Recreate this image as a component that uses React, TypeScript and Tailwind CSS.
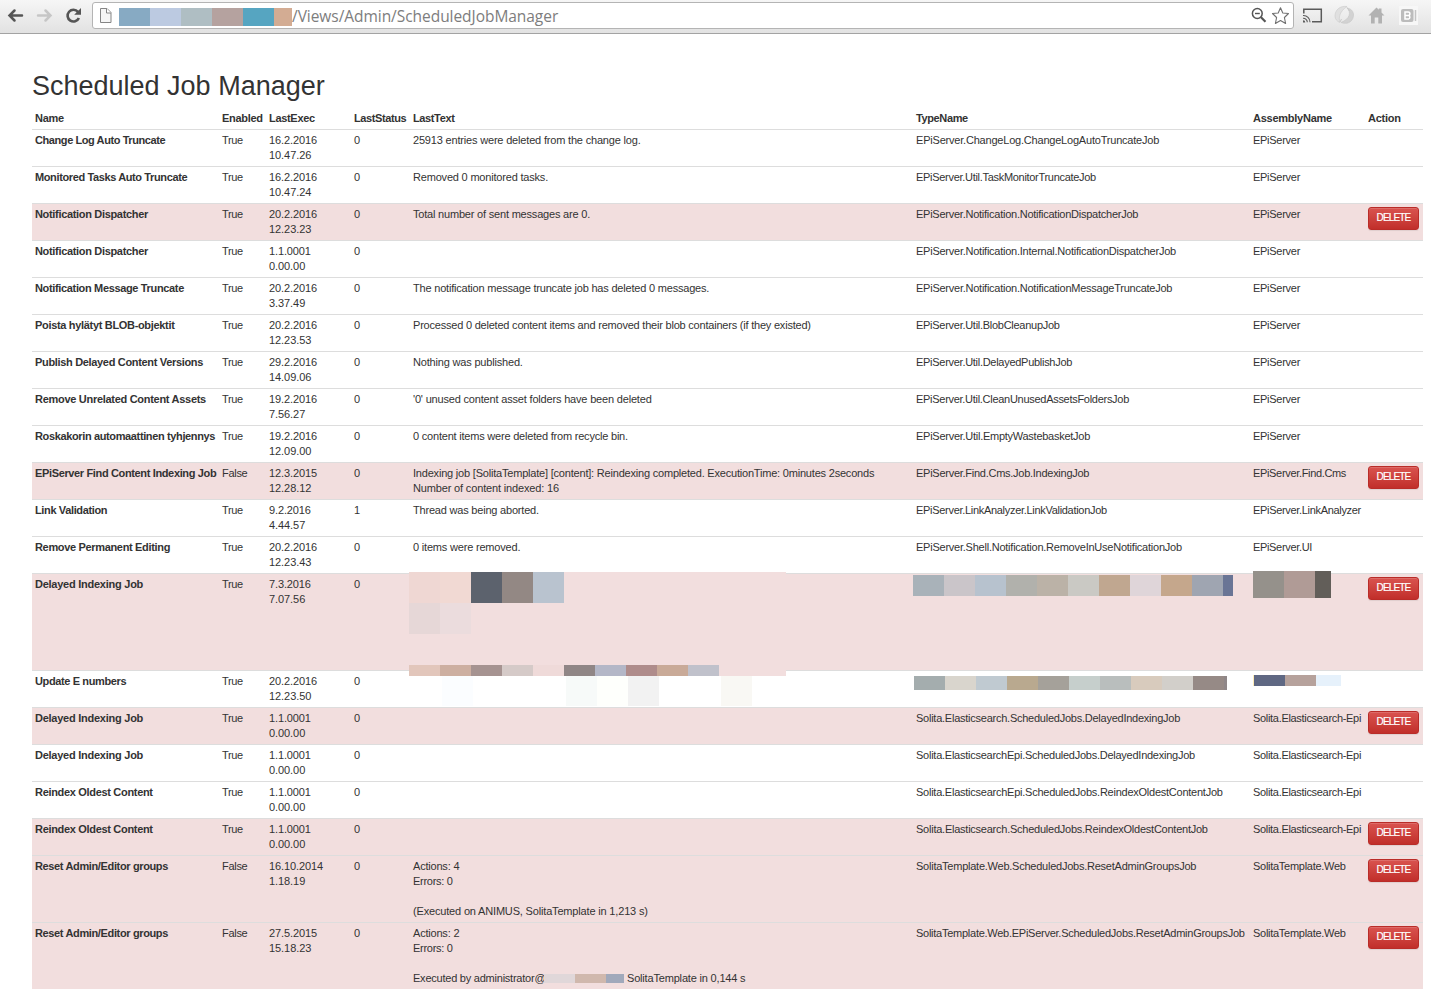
import React from "react";

type Tile = [width: number, color: string];

function Tiles({ items, h, className = "" }: { items: Tile[]; h: number; className?: string }) {
  return (
    <div className={`flex ${className}`} style={{ height: h }}>
      {items.map(([w, c], i) => (
        <span key={i} className="block h-full shrink-0" style={{ width: w, background: c }} />
      ))}
    </div>
  );
}

/** A text and the number of pixels by which its line is tightened. */
type Line = [text: string, tighten: number];

function Tight({ line: [text, by] }: { line: Line }) {
  return <span style={{ letterSpacing: `${-by / text.length}px` }}>{text}</span>;
}

function Lines({ lines }: { lines: Line[] }) {
  return (
    <>
      {lines.map((line, i) => (
        <div key={i} className="h-[15px]">
          <Tight line={line} />
        </div>
      ))}
    </>
  );
}

interface Job {
  name: Line;
  enabled: string;
  exec: [string, string];
  status: string;
  text?: Line[] | React.ReactElement;
  type: Line | React.ReactElement;
  assembly: Line | React.ReactElement;
  stale?: boolean;
  tall?: boolean;
}

const epi: Line = ["EPiServer", 2.5];
const elastic: Line = ["Solita.Elasticsearch-Epi", 7.5];
const web: Line = ["SolitaTemplate.Web", 5];

const jobs: Job[] = [
  { name: ["Change Log Auto Truncate", 10], enabled: "True", exec: ["16.2.2016", "10.47.26"], status: "0", text: [["25913 entries were deleted from the change log.", 8.5]], type: ["EPiServer.ChangeLog.ChangeLogAutoTruncateJob", 9], assembly: epi },
  { name: ["Monitored Tasks Auto Truncate", 11], enabled: "True", exec: ["16.2.2016", "10.47.24"], status: "0", text: [["Removed 0 monitored tasks.", 5]], type: ["EPiServer.Util.TaskMonitorTruncateJob", 11], assembly: epi },
  { name: ["Notification Dispatcher", 7.5], enabled: "True", exec: ["20.2.2016", "12.23.23"], status: "0", text: [["Total number of sent messages are 0.", 7]], type: ["EPiServer.Notification.NotificationDispatcherJob", 12], assembly: epi, stale: true },
  { name: ["Notification Dispatcher", 7.5], enabled: "True", exec: ["1.1.0001", "0.00.00"], status: "0", type: ["EPiServer.Notification.Internal.NotificationDispatcherJob", 14], assembly: epi },
  { name: ["Notification Message Truncate", 10], enabled: "True", exec: ["20.2.2016", "3.37.49"], status: "0", text: [["The notification message truncate job has deleted 0 messages.", 12]], type: ["EPiServer.Notification.NotificationMessageTruncateJob", 13], assembly: epi },
  { name: ["Poista hylätyt BLOB-objektit", 9], enabled: "True", exec: ["20.2.2016", "12.23.53"], status: "0", text: [["Processed 0 deleted content items and removed their blob containers (if they existed)", 18]], type: ["EPiServer.Util.BlobCleanupJob", 8], assembly: epi },
  { name: ["Publish Delayed Content Versions", 10.5], enabled: "True", exec: ["29.2.2016", "14.09.06"], status: "0", text: [["Nothing was published.", 4]], type: ["EPiServer.Util.DelayedPublishJob", 9], assembly: epi },
  { name: ["Remove Unrelated Content Assets", 9], enabled: "True", exec: ["19.2.2016", "7.56.27"], status: "0", text: [["'0' unused content asset folders have been deleted", 9]], type: ["EPiServer.Util.CleanUnusedAssetsFoldersJob", 12], assembly: epi },
  { name: ["Roskakorin automaattinen tyhjennys", 12.5], enabled: "True", exec: ["19.2.2016", "12.09.00"], status: "0", text: [["0 content items were deleted from recycle bin.", 9.5]], type: ["EPiServer.Util.EmptyWastebasketJob", 9], assembly: epi },
  { name: ["EPiServer Find Content Indexing Job", 12.5], enabled: "False", exec: ["12.3.2015", "12.28.12"], status: "0", text: [["Indexing job [SolitaTemplate] [content]: Reindexing completed. ExecutionTime: 0minutes 2seconds", 19], ["Number of content indexed: 16", 4.5]], type: ["EPiServer.Find.Cms.Job.IndexingJob", 9], assembly: ["EPiServer.Find.Cms", 6], stale: true },
  { name: ["Link Validation", 5.5], enabled: "True", exec: ["9.2.2016", "4.44.57"], status: "1", text: [["Thread was being aborted.", 5]], type: ["EPiServer.LinkAnalyzer.LinkValidationJob", 12], assembly: ["EPiServer.LinkAnalyzer", 7] },
  { name: ["Remove Permanent Editing", 8], enabled: "True", exec: ["20.2.2016", "12.23.43"], status: "0", text: [["0 items were removed.", 4]], type: ["EPiServer.Shell.Notification.RemoveInUseNotificationJob", 13], assembly: ["EPiServer.UI", 4] },
  {
    name: ["Delayed Indexing Job", 5], enabled: "True", exec: ["7.3.2016", "7.07.56"], status: "0", stale: true, tall: true,
    text: (
      <div className="absolute -left-px -top-[2px] z-10 flex h-[104px] w-[377px] flex-col bg-[#f2dede]">
        <Tiles h={31} items={[[31, "#efd7d3"], [31, "#f1d9d3"], [31, "#5c626d"], [31, "#938884"], [31, "#b9c3cf"]]} />
        <Tiles h={31} items={[[31, "#e6d7d7"], [31, "#ebdcdd"]]} />
        <Tiles h={11} className="mt-auto" items={[[31, "#e2c6bb"], [31, "#cdafa1"], [31, "#a69391"], [31, "#d5cac8"], [31, "#efdad9"], [31, "#908686"], [31, "#b4b7c7"], [31, "#af8c8b"], [31, "#c9aa98"], [31, "#c0c1cb"]]} />
      </div>
    ),
    type: <Tiles h={21} className="-ml-[3px] -mt-[2px]" items={[[31, "#a9b2b9"], [31, "#cac5c9"], [31, "#b7c2ce"], [31, "#b1b1ac"], [31, "#bbb2a7"], [31, "#cac9c4"], [31, "#c0a790"], [31, "#dfd5d9"], [31, "#c5a78c"], [31, "#9fa5b1"], [10, "#6a7595"]]} />,
    assembly: <Tiles h={27} className="-mt-[6px]" items={[[31, "#95918b"], [31, "#b09b96"], [16, "#625e59"]]} />,
  },
  {
    name: ["Update E numbers", 6], enabled: "True", exec: ["20.2.2016", "12.23.50"], status: "0",
    text: <Tiles h={30} className="-mb-[3px] ml-[29px] mt-[2px]" items={[[31, "#fbfdff"], [93, "transparent"], [31, "#f7faf9"], [31, "#fefffc"], [31, "#f2f2f2"], [62, "transparent"], [31, "#f9f8f4"]]} />,
    type: <Tiles h={14} className="-ml-[2px] mt-[2px]" items={[[31, "#a4adae"], [31, "#d9d5cd"], [31, "#c0cad1"], [31, "#b9a98f"], [31, "#a5a19a"], [31, "#c6cfcc"], [31, "#b9bebd"], [31, "#d8cbbd"], [31, "#d2cfca"], [31, "#968a86"], [3, "#8f8788"]]} />,
    assembly: <Tiles h={11} className="mt-px" items={[[1, "#ffedb8"], [31, "#5f6883"], [31, "#b6a29c"], [25, "#e6f1fb"]]} />,
  },
  { name: ["Delayed Indexing Job", 5], enabled: "True", exec: ["1.1.0001", "0.00.00"], status: "0", type: ["Solita.Elasticsearch.ScheduledJobs.DelayedIndexingJob", 13], assembly: elastic, stale: true },
  { name: ["Delayed Indexing Job", 5], enabled: "True", exec: ["1.1.0001", "0.00.00"], status: "0", type: ["Solita.ElasticsearchEpi.ScheduledJobs.DelayedIndexingJob", 14], assembly: elastic },
  { name: ["Reindex Oldest Content", 7], enabled: "True", exec: ["1.1.0001", "0.00.00"], status: "0", type: ["Solita.ElasticsearchEpi.ScheduledJobs.ReindexOldestContentJob", 15], assembly: elastic },
  { name: ["Reindex Oldest Content", 7], enabled: "True", exec: ["1.1.0001", "0.00.00"], status: "0", type: ["Solita.Elasticsearch.ScheduledJobs.ReindexOldestContentJob", 14], assembly: elastic, stale: true },
  { name: ["Reset Admin/Editor groups", 9], enabled: "False", exec: ["16.10.2014", "1.18.19"], status: "0", text: [["Actions: 4", 2], ["Errors: 0", 2.5], ["", 0], ["(Executed on ANIMUS, SolitaTemplate in 1,213 s)", 8]], type: ["SolitaTemplate.Web.ScheduledJobs.ResetAdminGroupsJob", 12.5], assembly: web, stale: true },
  {
    name: ["Reset Admin/Editor groups", 9], enabled: "False", exec: ["27.5.2015", "15.18.23"], status: "0", stale: true,
    text: (
      <>
        <Lines lines={[["Actions: 2", 2], ["Errors: 0", 2.5], ["", 0]]} />
        <div className="flex h-[15px]">
          <span className="w-[131px]"><Tight line={["Executed by administrator@", 6]} /></span>
          <Tiles h={9} className="mt-[3px]" items={[[31, "#e0d7d9"], [31, "#d0b8ad"], [18, "#a1a9bb"]]} />
          <span className="ml-[3px]"><Tight line={["SolitaTemplate in 0,144 s", 4.5]} /></span>
        </div>
      </>
    ),
    type: ["SolitaTemplate.Web.EPiServer.ScheduledJobs.ResetAdminGroupsJob", 16], assembly: web,
  },
];

const headings: Line[] = [
  ["Name", 1], ["Enabled", 2], ["LastExec", 2.5], ["LastStatus", 4],
  ["LastText", 3], ["TypeName", 3], ["AssemblyName", 3], ["Action", 1.5],
];

const cell = "relative border-t border-[#dddddd] p-[3px] align-top whitespace-nowrap";

function JobRow({ job }: { job: Job }) {
  return (
    <tr className={`${job.stale ? "bg-[#f2dede]" : ""} ${job.tall ? "h-[97px]" : "h-[37px]"}`}>
      <td className={`${cell} font-bold`}><Lines lines={[job.name]} /></td>
      <td className={cell}><Lines lines={[[job.enabled, 1.5]]} /></td>
      <td className={cell}><Lines lines={[[job.exec[0], 1], [job.exec[1], 0.5]]} /></td>
      <td className={cell}>{job.status}</td>
      <td className={cell}>{Array.isArray(job.text) ? <Lines lines={job.text} /> : job.text}</td>
      <td className={cell}>{Array.isArray(job.type) ? <Lines lines={[job.type]} /> : job.type}</td>
      <td className={cell}>{Array.isArray(job.assembly) ? <Lines lines={[job.assembly]} /> : job.assembly}</td>
      <td className={cell}>
        {job.stale && (
          <button className="flex h-[23px] w-[51px] justify-center rounded-[3px] border border-[#b92c28] bg-linear-to-b from-[#d9534f] to-[#c12e2a] text-[10px] leading-[19px] tracking-[-0.85px] text-white [-webkit-text-stroke:0.2px_white] shadow-[inset_0_1px_0_rgba(255,255,255,0.15),0_1px_1px_rgba(0,0,0,0.075)]">
            DELETE
          </button>
        )}
      </td>
    </tr>
  );
}

function Toolbar() {
  return (
    <header className="flex h-[34px] items-start border-b border-[#a3a3a3] bg-linear-to-b from-[#f6f6f6] to-[#e2e2e2]">
      <svg className="h-[33px] w-[92px] shrink-0" viewBox="0 0 92 33" fill="none">
        <path d="M22 15.5H9.5M14.5 10.5L9.5 15.5L14.5 20.5" stroke="#555" strokeWidth="2.5" strokeLinecap="round" />
        <path d="M38 15.5H50.5M45.5 10.5L50.5 15.5L45.5 20.5" stroke="#c6c6c6" strokeWidth="2.5" strokeLinecap="round" />
        <path d="M78 11.8A5.9 5.9 0 1 0 78.9 18" stroke="#555" strokeWidth="2.6" />
        <path d="M81 8V14.8H74.2Z" fill="#555" />
      </svg>
      <div className="mt-[2px] flex h-[27px] w-[1202px] shrink-0 items-start rounded-[3px] border border-[#b4b4b4] bg-white">
        <svg className="ml-[6px] mt-[4px] h-[18px] w-[14px]" viewBox="0 0 14 18" fill="none">
          <path d="M1.5 1.5H8L12 5.5V15.5H1.5Z" fill="#f6f6f6" stroke="#858585" />
          <path d="M7.5 1.5V6H12" fill="#fff" stroke="#858585" />
        </svg>
        <Tiles h={18} className="ml-[6px] mt-[5px]" items={[[31, "#87aac3"], [31, "#bccae1"], [31, "#afbec3"], [31, "#b5a29f"], [31, "#56a5c1"], [18, "#d3ac93"]]} />
        <span className="font-['Open_Sans','Noto_Sans',sans-serif] text-[15.5px] leading-[26px] text-[#7d7d7d]">
          <Tight line={["/Views/Admin/ScheduledJobManager", 1.5]} />
        </span>
        <svg className="ml-auto mr-[2px] h-[25px] w-[42px] shrink-0" viewBox="1249 3 42 25" fill="none">
          <circle cx="1257.3" cy="13.5" r="4.9" stroke="#555" strokeWidth="1.5" />
          <path d="M1255 13.5H1259.8" stroke="#555" strokeWidth="1.4" />
          <path d="M1261 17.3L1265.5 21.8" stroke="#555" strokeWidth="2.2" />
          <path d="M1280.5 7.8L1282.8 13L1288.500 13.500L1284.400 17.500L1285.600 23.500L1280.500 20.500L1275.400 23.500L1276.600 17.500L1272.500 13.500L1278.200 13Z" stroke="#707070" strokeWidth="1.1" strokeLinejoin="round" />
        </svg>
      </div>
      <svg className="h-[33px] w-[137px] shrink-0" viewBox="1294 0 137 33" fill="none">
        <path d="M1303.800 13.500V9.300H1321.300V21.700H1312" stroke="#5a5a5a" strokeWidth="1.5" />
        <path d="M1303 15.500A6.500 6.500 0 0 1 1310 22.300M1303 18.200A4 4 0 0 1 1307.300 22.300" stroke="#5a5a5a" strokeWidth="1.1" />
        <path d="M1303 20.200V22.500H1305.300A2.300 2.300 0 0 0 1303 20.200Z" fill="#5a5a5a" />
        <path d="M1347 6.500C1340 5.500 1335 10 1335 16C1335 19 1337 21.500 1340 22.500C1338.500 18 1339 12 1347 6.500Z" fill="#e0e0e0" stroke="#cbcbcb" strokeWidth=".6" />
        <path d="M1347 8C1351.500 12 1350 19 1341 22.500C1349 25.500 1354 20 1353.500 14C1353 10.500 1350.500 8.500 1347 8Z" fill="#d2d2d2" stroke="#c6c6c6" strokeWidth=".6" />
        <path d="M1340 22L1341.500 19M1347 7.500L1349.500 11" stroke="#c8c8c8" />
        <path d="M1368.500 15.500L1376.500 7.500L1378.800 9.800V8.500H1381.500V12.500L1384.500 15.500H1382V23.500H1378.300V17.500H1374.700V23.500H1371V15.500Z" fill="#b2b2b2" />
        <rect x="1399" y="6" width="19" height="19" fill="#f7f7f7" />
        <rect x="1401" y="9" width="12.500" height="13" rx="2" fill="#bcbcbc" />
        <path d="M1405 12H1408.200A1.700 1.700 0 0 1 1408.200 15.500H1405ZM1405 15.500H1408.500A1.800 1.800 0 0 1 1408.500 19H1405Z" stroke="#fff" strokeWidth="1.500" />
        <path d="M1415.500 10V21" stroke="#c4c4c4" strokeWidth="1.500" />
      </svg>
    </header>
  );
}

export default function App() {
  return (
    <div className="h-[995px] w-[1431px] overflow-hidden bg-white font-['Liberation_Sans',Arial,sans-serif] text-[#333]">
      <Toolbar />
      <main className="pl-[32px] pt-[34px]">
        <h1 className="h-[40px] text-[27px] leading-[37px]">Scheduled Job Manager</h1>
        <table className="w-[1391px] table-fixed border-separate border-spacing-0 text-[11px] leading-[15px]">
          <colgroup>
            <col className="w-[187px]" />
            <col className="w-[47px]" />
            <col className="w-[85px]" />
            <col className="w-[59px]" />
            <col className="w-[503px]" />
            <col className="w-[337px]" />
            <col className="w-[115px]" />
            <col className="w-[58px]" />
          </colgroup>
          <thead>
            <tr className="h-[21px] text-left">
              {headings.map((h) => (
                <th key={h[0]} className="p-[3px] font-bold"><Lines lines={[h]} /></th>
              ))}
            </tr>
          </thead>
          <tbody>
            {jobs.map((job, i) => (
              <JobRow key={i} job={job} />
            ))}
          </tbody>
        </table>
      </main>
    </div>
  );
}
